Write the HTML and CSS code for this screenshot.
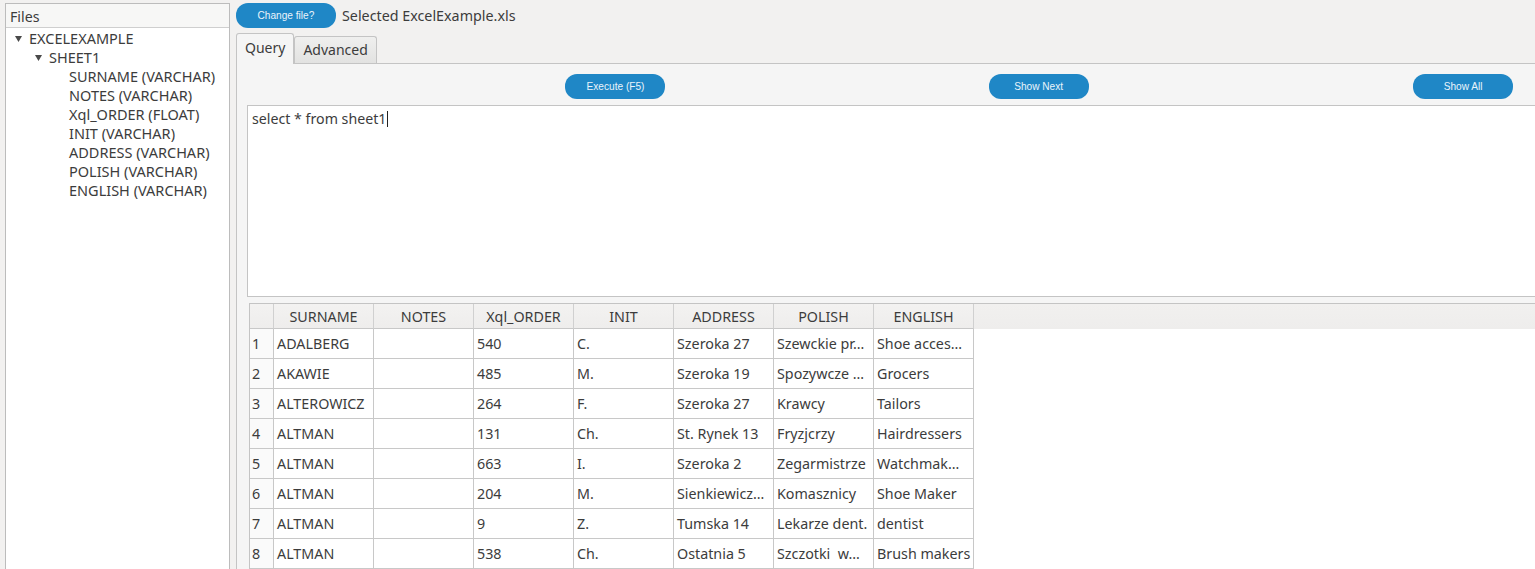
FILE: index.html
```html
<!DOCTYPE html>
<html lang="en">
<head>
<meta charset="utf-8">
<title>Excel Query</title>
<link rel="stylesheet" href="styles.css">
</head>
<body>
<div class="app">
  <aside class="files">
    <div class="files-head">Files</div>
    <ul class="tree">
      <li class="node lvl0"><svg class="tri" width="7" height="6" viewBox="0 0 7 6"><polygon points="0,0 7,0 3.5,6"/></svg>EXCELEXAMPLE</li>
      <li class="node lvl1"><svg class="tri" width="7" height="6" viewBox="0 0 7 6"><polygon points="0,0 7,0 3.5,6"/></svg>SHEET1</li>
      <li class="node lvl2">SURNAME (VARCHAR)</li>
      <li class="node lvl2">NOTES (VARCHAR)</li>
      <li class="node lvl2">Xql_ORDER (FLOAT)</li>
      <li class="node lvl2">INIT (VARCHAR)</li>
      <li class="node lvl2">ADDRESS (VARCHAR)</li>
      <li class="node lvl2">POLISH (VARCHAR)</li>
      <li class="node lvl2">ENGLISH (VARCHAR)</li>
    </ul>
  </aside>
  <main class="main">
    <div class="topbar">
      <button class="btn"><span>Change file?</span></button>
      <span class="selected">Selected ExcelExample.xls</span>
    </div>
    <div class="tabs">
      <div class="tab active">Query</div>
      <div class="tab">Advanced</div>
    </div>
    <div class="panel">
      <div class="actions">
        <button class="btn"><span>Execute (F5)</span></button>
        <button class="btn"><span>Show Next</span></button>
        <button class="btn"><span>Show All</span></button>
      </div>
      <div class="editor">select * from sheet1<span class="caret"></span></div>
      <div class="grid-wrap">
        <table class="grid">
          <colgroup>
            <col class="c-num"><col class="c"><col class="c"><col class="c"><col class="c"><col class="c"><col class="c"><col class="c">
          </colgroup>
          <thead>
            <tr><th></th><th>SURNAME</th><th>NOTES</th><th>Xql_ORDER</th><th>INIT</th><th>ADDRESS</th><th>POLISH</th><th>ENGLISH</th></tr>
          </thead>
          <tbody>
            <tr><td class="num">1</td><td>ADALBERG</td><td></td><td>540</td><td>C.</td><td>Szeroka 27</td><td>Szewckie pr…</td><td>Shoe acces…</td></tr>
            <tr><td class="num">2</td><td>AKAWIE</td><td></td><td>485</td><td>M.</td><td>Szeroka 19</td><td>Spozywcze …</td><td>Grocers</td></tr>
            <tr><td class="num">3</td><td>ALTEROWICZ</td><td></td><td>264</td><td>F.</td><td>Szeroka 27</td><td>Krawcy</td><td>Tailors</td></tr>
            <tr><td class="num">4</td><td>ALTMAN</td><td></td><td>131</td><td>Ch.</td><td>St. Rynek 13</td><td>Fryzjcrzy</td><td>Hairdressers</td></tr>
            <tr><td class="num">5</td><td>ALTMAN</td><td></td><td>663</td><td>I.</td><td>Szeroka 2</td><td>Zegarmistrze</td><td>Watchmak…</td></tr>
            <tr><td class="num">6</td><td>ALTMAN</td><td></td><td>204</td><td>M.</td><td>Sienkiewicz…</td><td>Komasznicy</td><td>Shoe Maker</td></tr>
            <tr><td class="num">7</td><td>ALTMAN</td><td></td><td>9</td><td>Z.</td><td>Tumska 14</td><td>Lekarze dent.</td><td>dentist</td></tr>
            <tr><td class="num">8</td><td>ALTMAN</td><td></td><td>538</td><td>Ch.</td><td>Ostatnia 5</td><td>Szczotki&nbsp; w…</td><td>Brush makers</td></tr>
          </tbody>
        </table>
      </div>
    </div>
  </main>
</div>
</body>
</html>
```
FILE: styles.css
```css
html, body {
  margin: 0;
  padding: 0;
  height: 100%;
  overflow: hidden;
}
body {
  background: #f2f1f0;
  font-family: "Noto Sans", "Open Sans", sans-serif;
  font-size: 14.5px;
  color: #3c3c3c;
}
.app {
  display: flex;
  height: 100%;
}
.files {
  flex: 0 0 225px;
  box-sizing: border-box;
  margin: 3px 0 0 5px;
  border: 1px solid #bcbcbc;
  border-bottom: none;
  background: #fff;
  display: flex;
  flex-direction: column;
}
.files-head {
  height: 23px;
  line-height: 25px;
  padding-left: 4px;
  background: #f7f7f6;
  border-bottom: 1px solid #cfcfcf;
  font-size: 14.2px;
}
.tree {
  list-style: none;
  margin: 0;
  padding: 1px 0 0 0;
}
.node {
  height: 19px;
  line-height: 19px;
  white-space: nowrap;
  display: flex;
  align-items: center;
}
.tri {
  fill: #4a4a4a;
  margin-right: 7px;
}
.lvl0 { padding-left: 9px; }
.lvl1 { padding-left: 29px; }
.lvl2 { padding-left: 63px; }

.main {
  flex: 1;
  min-width: 0;
  margin-left: 6px;
  display: flex;
  flex-direction: column;
  overflow: hidden;
}
.topbar {
  margin-top: 3px;
  height: 25px;
  display: flex;
  align-items: center;
}
.btn {
  width: 100px;
  height: 25px;
  border: none;
  border-radius: 12px;
  background: #1f87c6;
  color: #eaf4fb;
  padding: 0 0 2px 0;
  font-family: "Liberation Sans", Arial, sans-serif;
  font-size: 11px;
  display: flex;
  align-items: center;
  justify-content: center;
}
.btn span {
  display: inline-block;
  transform: scaleX(0.92);
}
.selected {
  margin-left: 6px;
  font-size: 14.3px;
}
.tabs {
  margin-top: 5px;
  display: flex;
  align-items: flex-end;
  height: 30px;
  position: relative;
  z-index: 1;
}
.tab {
  box-sizing: border-box;
  height: 27px;
  padding: 0 8px;
  line-height: 25px;
  border: 1px solid #c4c4c4;
  border-bottom: none;
  border-radius: 3px 3px 0 0;
  background: linear-gradient(#efefee, #e2e2e1);
  font-size: 14px;
}
.tab.active {
  height: 31px;
  line-height: 28px;
  background: #f5f5f5;
  margin-bottom: -1px;
}
.panel {
  flex: 1;
  background: #f5f5f5;
  border-top: 1px solid #c4c4c4;
  border-left: 1px solid #c4c4c4;
  display: flex;
  flex-direction: column;
}
.actions {
  display: grid;
  grid-template-columns: repeat(3, 1fr);
  justify-items: end;
  padding: 10px 22px 0 4px;
}
.editor {
  margin: 6px -20px 0 10px;
  height: 192px;
  box-sizing: border-box;
  border: 1px solid #c4c4c4;
  background: #fff;
  padding: 3px 4px;
  font-size: 14.2px;
  line-height: 20px;
}
.caret {
  display: inline-block;
  width: 0;
  height: 16px;
  border-left: 1px solid #222;
  vertical-align: -3px;
  margin-left: 1px;
}
.grid-wrap {
  flex: 1;
  margin: 6px -20px 0 12px;
  border-top: 1px solid #c4c4c4;
  border-left: 1px solid #c4c4c4;
  background: linear-gradient(#f1f0ef, #eeedec) top left / 100% 25px no-repeat, #fff;
}
.grid {
  table-layout: fixed;
  border-collapse: separate;
  border-spacing: 0;
  width: 724px;
  font-size: 14.3px;
}
.c-num { width: 24px; }
.c { width: 100px; }
.grid th {
  box-sizing: border-box;
  height: 25px;
  padding: 0;
  font-weight: normal;
  text-align: center;
  border-right: 1px solid #d0d0d0;
  border-bottom: 1px solid #c8c8c8;
  background: linear-gradient(#f3f2f1, #eeedec);
  white-space: nowrap;
}
.grid td {
  box-sizing: border-box;
  height: 30px;
  padding: 0 3px 1px 3px;
  border-right: 1px solid #c8c8c8;
  border-bottom: 1px solid #c8c8c8;
  white-space: nowrap;
  overflow: hidden;
  background: #fff;
}
.grid td.num {
  background: #fafafa;
  padding-left: 2px;
}
```
